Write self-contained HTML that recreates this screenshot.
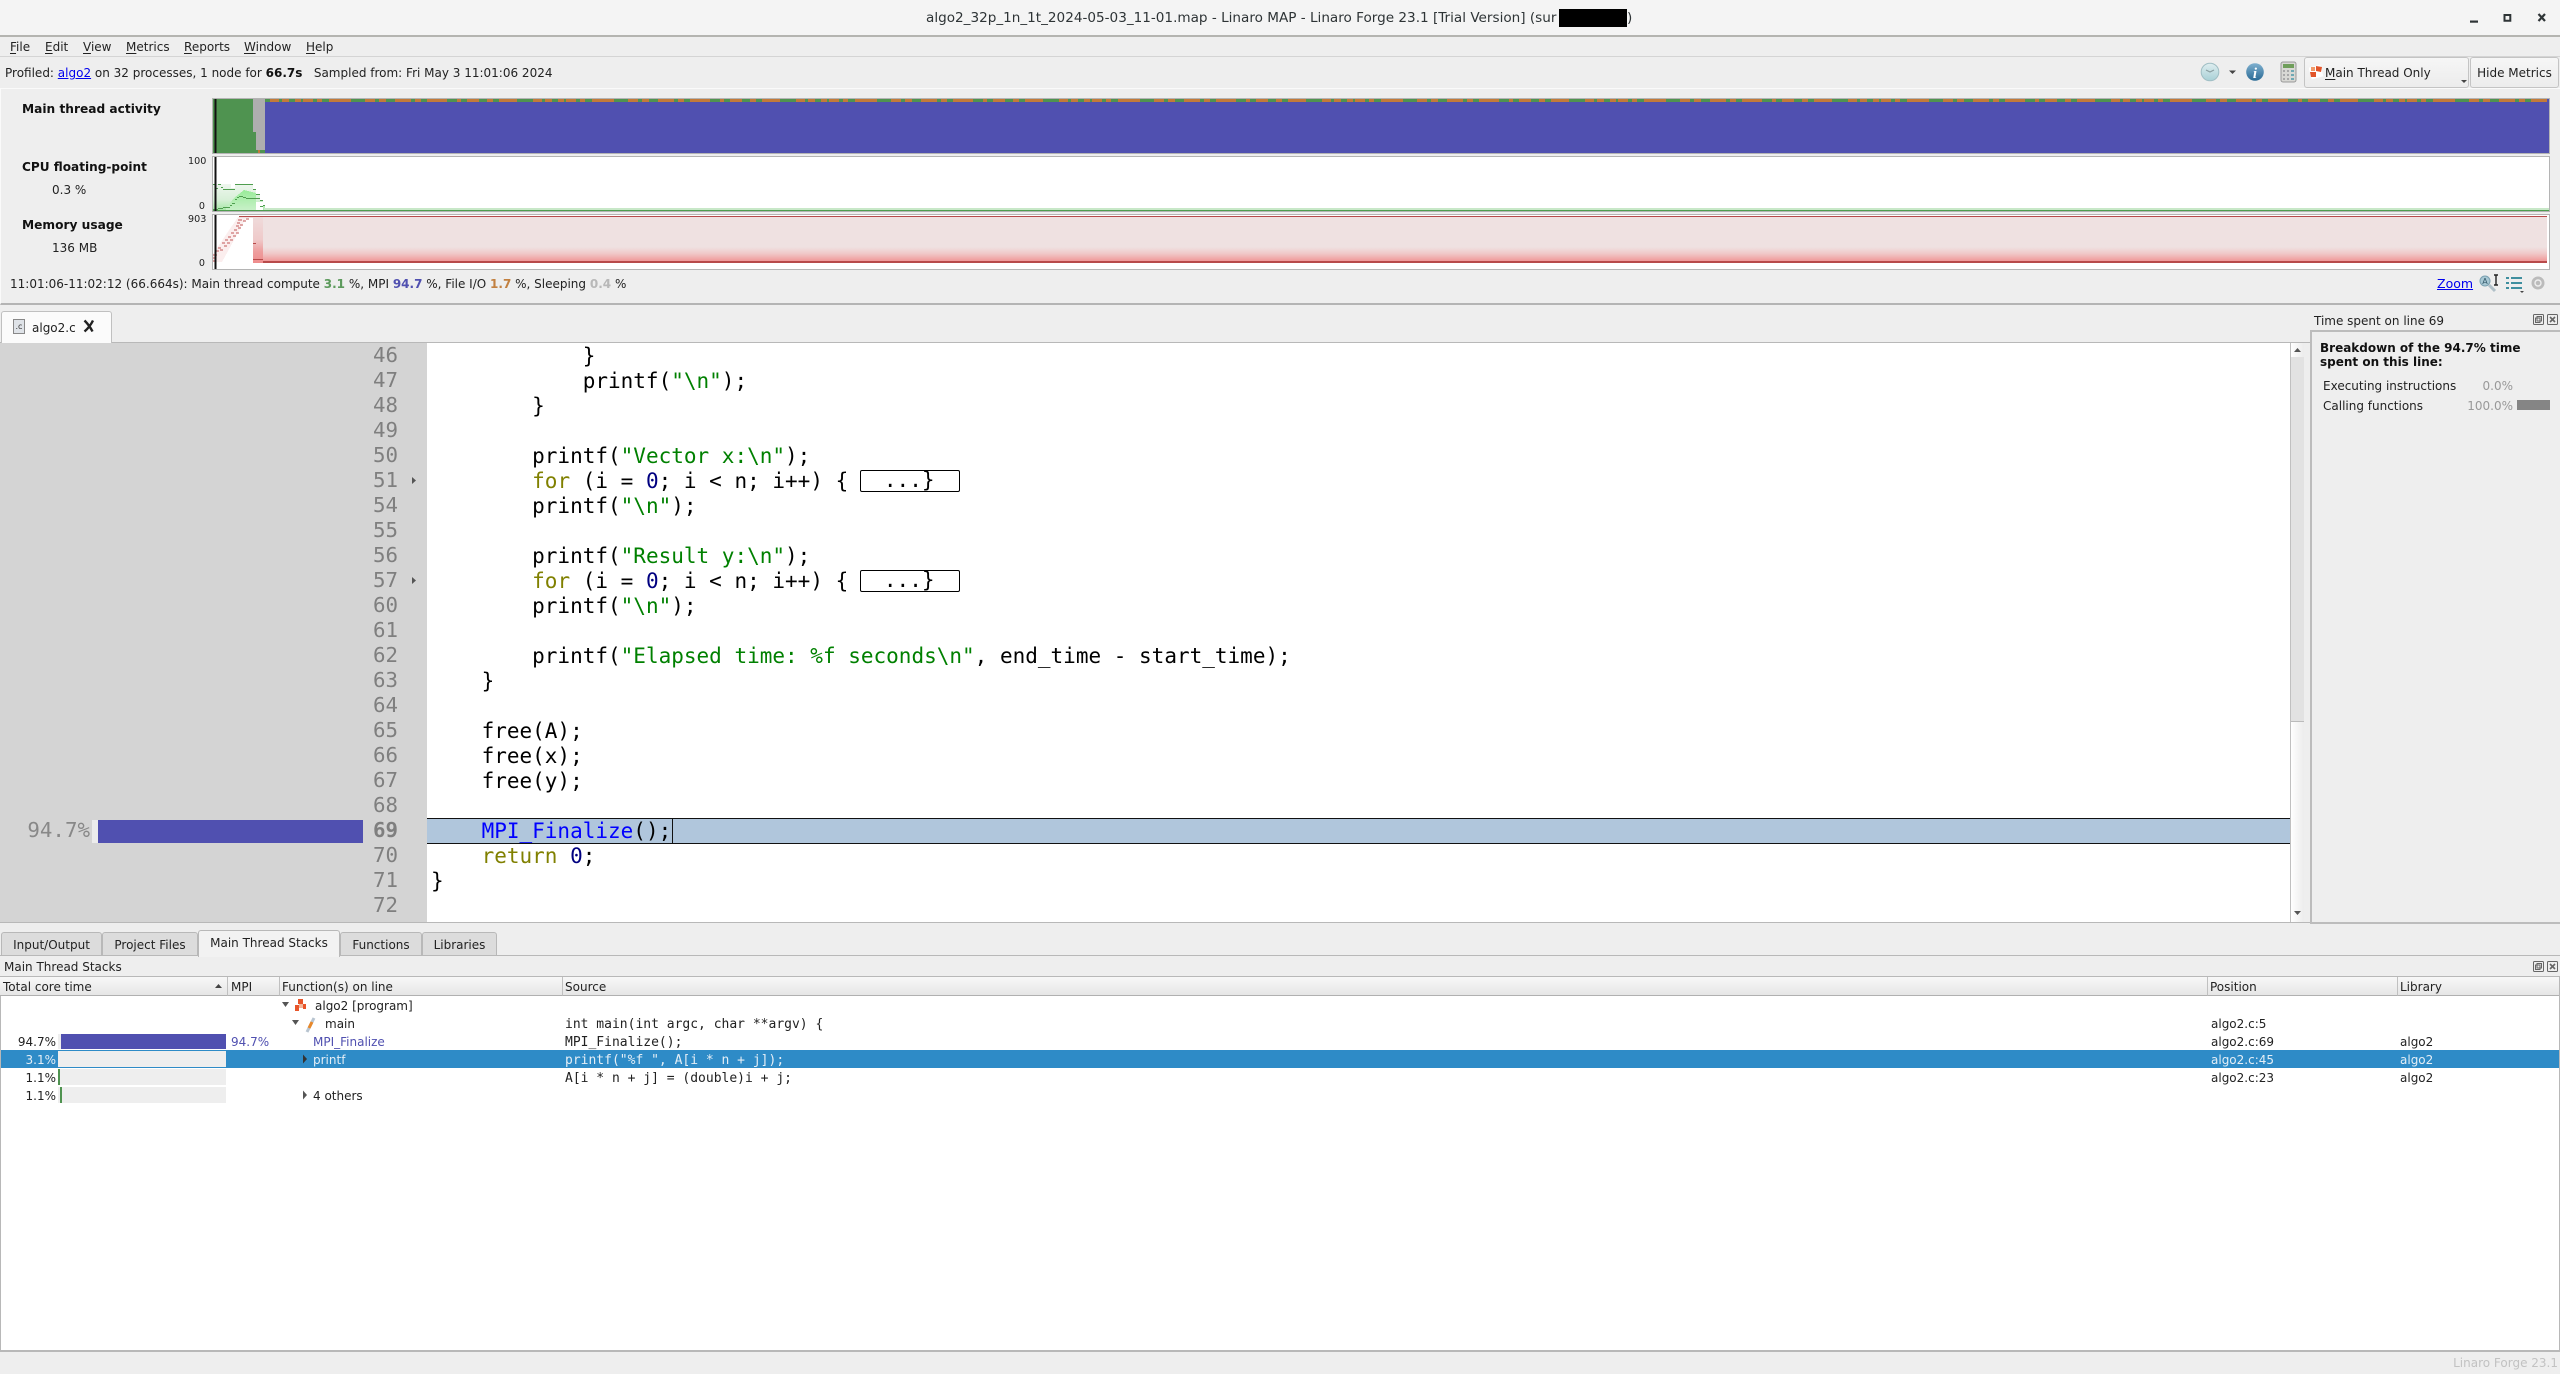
<!DOCTYPE html>
<html><head><meta charset="utf-8"><title>Linaro MAP</title>
<style>
html,body{margin:0;padding:0;background:#eeeeee;}
body{position:relative;width:2560px;height:1374px;overflow:hidden;font-family:"DejaVu Sans","Liberation Sans",sans-serif;font-size:12px;color:#222;}
div,span.a,a.a{position:absolute;}
.t{white-space:pre;line-height:20px;height:20px;margin-top:1px;}
.b{font-weight:bold;color:#111;}
u{text-underline-offset:2px;}
.box{box-sizing:border-box;}
.c{position:absolute;left:431px;height:25px;line-height:26px;font-family:"DejaVu Sans Mono","Liberation Mono",monospace;font-size:21px;white-space:pre;color:#000;}
.n{position:absolute;left:340px;width:58px;text-align:right;height:25px;line-height:25px;font-family:"DejaVu Sans Mono","Liberation Mono",monospace;font-size:20.8px;color:#7f7f7f;}
.s{color:#008000}.k{color:#808000}.d{color:#000080}.f{color:#0000ff}
.fold{display:inline-block;box-sizing:border-box;width:100px;height:22px;line-height:19px;border:1px solid #000;border-radius:2px;margin-left:-1px;vertical-align:0;padding-left:23px;position:relative;top:-1px;margin-top:-2px}
.tb{top:932px;height:24px;background:#dcdcdc;border:1px solid #b8b8b8;box-sizing:border-box;line-height:24px;text-align:center;border-radius:3px 3px 0 0;}
.h{top:977px;height:19px;line-height:21px;white-space:pre;padding-left:4px;box-sizing:border-box;background:linear-gradient(#f8f8f8,#e6e6e6);border-right:1px solid #c0c0c0;border-bottom:1px solid #b0b0b0;overflow:hidden;}
.r{white-space:pre;height:18px;line-height:18px;}
.m{font-family:"DejaVu Sans Mono","Liberation Mono",monospace;font-size:13px;margin-top:1px;}
.w{color:#e4eef6;}
</style></head><body>

<!-- title bar -->
<div class="box" style="left:0;top:0;width:2560px;height:37px;background:#f4f4f4;border-bottom:2px solid #b4b4b0"></div>
<div class="t" style="left:926px;top:7px;font-size:13.58px;color:#2e3436">algo2_32p_1n_1t_2024-05-03_11-01.map - Linaro MAP - Linaro Forge 23.1 [Trial Version] (sur </div>
<div style="left:1559px;top:9px;width:68px;height:18px;background:#000"></div>
<div class="t" style="left:1627px;top:7px;font-size:13.58px;color:#2e3436">)</div>
<svg style="position:absolute;left:2460px;top:8px" width="100" height="24"><path d="M10 12.500h8v2.200h-8z" fill="#2e3436"/><path d="M44.500 7h5.800v5.800h-5.800z" fill="none" stroke="#2e3436" stroke-width="2"/><path d="M78.500 6l6.500 7M85 6l-6.500 7" fill="none" stroke="#2e3436" stroke-width="2.200"/></svg>

<!-- menu -->
<div class="box" style="left:0;top:37px;width:2560px;height:20px;background:#eeeeee;border-bottom:1px solid #d4d4d4"></div>
<div class="t" style="left:10px;top:36px"><u>F</u>ile</div>
<div class="t" style="left:45px;top:36px"><u>E</u>dit</div>
<div class="t" style="left:83px;top:36px"><u>V</u>iew</div>
<div class="t" style="left:126px;top:36px"><u>M</u>etrics</div>
<div class="t" style="left:184px;top:36px"><u>R</u>eports</div>
<div class="t" style="left:244px;top:36px"><u>W</u>indow</div>
<div class="t" style="left:306px;top:36px"><u>H</u>elp</div>

<!-- toolbar -->
<div class="t" style="left:5px;top:62px">Profiled: <a href="#" style="color:#0000ee">algo2</a> on 32 processes, 1 node for <b style="color:#111">66.7s</b>   Sampled from: Fri May 3 11:01:06 2024</div>
<svg style="position:absolute;left:2195px;top:58px" width="112" height="30">
 <defs>
  <linearGradient id="g1" x1="0" y1="0" x2="0" y2="1"><stop offset="0" stop-color="#dfeef0"/><stop offset="1" stop-color="#a8d0d6"/></linearGradient>
  <linearGradient id="g2" x1="0" y1="0" x2="0" y2="1"><stop offset="0" stop-color="#7fb0cf"/><stop offset="1" stop-color="#2a6a95"/></linearGradient>
 </defs>
 <circle cx="15" cy="14" r="8.800" fill="url(#g1)" stroke="#a0bec4"/>
 <path d="M11 12l4 2 4-2" fill="none" stroke="#8a9ea1" stroke-width="1.200"/>
 <path d="M34 12.500h7l-3.500 3.500z" fill="#444"/>
 <circle cx="60" cy="14" r="8.800" fill="url(#g2)"/>
 <text x="60" y="20" font-family="Liberation Serif,serif" font-style="italic" font-weight="bold" font-size="15" fill="#fff" text-anchor="middle">i</text>
 <rect x="86" y="4" width="15" height="20" rx="2" fill="#d8d8d4" stroke="#999"/>
 <rect x="88" y="6" width="11" height="4" fill="#6f9e5a"/>
 <path d="M88 12h2v2h-2zM92 12h2v2h-2zM88 16h2v2h-2zM92 16h2v2h-2zM88 20h2v2h-2zM92 20h2v2h-2z" fill="#a8a8a8"/>
 <path d="M96 12h3v2h-3zM96 16h3v2h-3zM96 20h3v2h-3z" fill="#6fa8b4"/>
</svg>
<div class="box" style="left:2304px;top:57px;width:165px;height:31px;background:linear-gradient(#f6f6f6,#ececec);border:1px solid #c4c4c4;border-radius:3px"></div>
<svg style="position:absolute;left:2309px;top:64px" width="16" height="16"><rect x="1" y="2" width="12" height="12" fill="#fff" transform="rotate(-15 7 8)"/><path d="M7 2l6 1-1 5-5-1zM1 8l6 0v5l-5 0z" fill="#e2552a"/><path d="M2 3h4v4H2z" fill="#f09a6a"/></svg>
<div class="t" style="left:2325px;top:62px"><u>M</u>ain Thread Only</div>
<svg style="position:absolute;left:2460px;top:78px" width="8" height="8"><path d="M1 2h6l-3 3z" fill="#444"/></svg>
<div class="box" style="left:2470px;top:57px;width:89px;height:31px;background:linear-gradient(#f6f6f6,#ececec);border:1px solid #c4c4c4;border-radius:3px;text-align:center;line-height:30px">Hide Metrics</div>

<!-- metrics panel -->
<div class="box" style="left:0;top:88px;width:2560px;height:217px;background:#eeeeee;border-top:1px solid #fafafa;border-left:1px solid #fafafa;border-bottom:2px solid #b4b4b4"></div>
<div class="t b" style="left:22px;top:98px;font-size:12.2px">Main thread activity</div>
<div class="t b" style="left:22px;top:156px;font-size:12.1px">CPU floating-point</div>
<div class="t" style="left:52px;top:179px">0.3 %</div>
<div class="t b" style="left:22px;top:214px;font-size:12.2px">Memory usage</div>
<div class="t" style="left:52px;top:237px">136 MB</div>
<div class="t" style="left:188px;top:151px;width:17px;text-align:right;font-size:9.600px">100</div>
<div class="t" style="left:188px;top:196px;width:17px;text-align:right;font-size:9.600px">0</div>
<div class="t" style="left:188px;top:209px;width:17px;text-align:right;font-size:9.600px">903</div>
<div class="t" style="left:188px;top:253px;width:17px;text-align:right;font-size:9.600px">0</div>

<svg style="position:absolute;left:212px;top:98px" width="2338" height="172" viewBox="212 98 2338 172" shape-rendering="crispEdges">
 <defs>
  <pattern id="strip" x="267" y="99" width="263" height="3" patternUnits="userSpaceOnUse">
   <rect width="263" height="3" fill="#4f9350"/>
   <rect x="3" width="9" height="3" fill="#c27a3a"/><rect x="15" width="7" height="3" fill="#c27a3a"/><rect x="28" width="6" height="3" fill="#c27a3a"/><rect x="36" width="10" height="3" fill="#c27a3a"/><rect x="50" width="5" height="3" fill="#c27a3a"/><rect x="62" width="22" height="3" fill="#c27a3a"/><rect x="98" width="10" height="3" fill="#c27a3a"/><rect x="112" width="7" height="3" fill="#c27a3a"/><rect x="128" width="16" height="3" fill="#c27a3a"/><rect x="148" width="6" height="3" fill="#c27a3a"/><rect x="160" width="20" height="3" fill="#c27a3a"/><rect x="190" width="4" height="3" fill="#c27a3a"/><rect x="200" width="12" height="3" fill="#c27a3a"/><rect x="220" width="6" height="3" fill="#c27a3a"/><rect x="232" width="18" height="3" fill="#c27a3a"/>
  </pattern>
  <linearGradient id="cg" x1="0" y1="0" x2="0" y2="1"><stop offset="0" stop-color="#eef6ee"/><stop offset=".6" stop-color="#d8f0d8"/><stop offset="1" stop-color="#a8e8a8"/></linearGradient>
  <linearGradient id="cg2" x1="0" y1="0" x2="0" y2="1"><stop offset="0" stop-color="#98ec98"/><stop offset="1" stop-color="#c8f0c8"/></linearGradient>
  <linearGradient id="mg" x1="0" y1="216" x2="0" y2="263" gradientUnits="userSpaceOnUse"><stop offset="0" stop-color="#efe1e1"/><stop offset=".66" stop-color="#efe1e1"/><stop offset=".8" stop-color="#f0c8c8"/><stop offset=".92" stop-color="#f0a4a4"/><stop offset="1" stop-color="#ee8c8c"/></linearGradient>
  <linearGradient id="mg2" x1="0" y1="216" x2="0" y2="263" gradientUnits="userSpaceOnUse"><stop offset="0" stop-color="#efdcdc"/><stop offset=".5" stop-color="#efcaca"/><stop offset=".75" stop-color="#ee9e9e"/><stop offset="1" stop-color="#ee8c8c"/></linearGradient>
 </defs>
 <!-- main thread -->
 <rect x="212.500" y="98.500" width="2337" height="55" fill="#5050b0" stroke="#b4b4b4"/>
 <rect x="213" y="99" width="40" height="54" fill="#4f9350"/>
 <rect x="253" y="99" width="3" height="54" fill="#4f9350"/>
 <rect x="253" y="99" width="14" height="33" fill="#aeaeae"/>
 <rect x="256" y="132" width="9" height="18" fill="#aeaeae"/>
 <rect x="256" y="99" width="9" height="33" fill="#aeaeae"/>
 <rect x="256" y="150" width="9" height="3" fill="#4f9350"/>
 <rect x="258" y="150" width="2" height="3" fill="#c27a3a"/>
 <rect x="265" y="99" width="2" height="3" fill="#4f9350"/>
 <rect x="267" y="99" width="2280" height="3" fill="url(#strip)"/>
 <rect x="265" y="102" width="2" height="51" fill="#5050b0"/>
 <rect x="214.500" y="99" width="2" height="54" fill="#111"/>

 <!-- cpu -->
 <rect x="212.500" y="156.500" width="2337" height="55" fill="#fff" stroke="#b4b4b4"/>
 <path d="M213 184H231V188H235V184H253V189H256V194H260V200H263V205H265V210H213Z" fill="url(#cg)"/>
 <path d="M226 208L234 198L244 190L256 193V210H226Z" fill="url(#cg2)"/>
 <rect x="256" y="202" width="7" height="8" fill="#fff"/>
 <path d="M213 184.500h3M216 188.500h2M218 184.500h3M221 187.500h2M223 189.500h12M235 184.500h18M253 189.500h3M256 194.500h4M260 200.500h3M263 205.500h2" fill="none" stroke="#4f9e4f" stroke-width="1"/>
 <path d="M213 209.500h5M218 208.500h5M223 207.500h7M230 205.500h2M232 203.500h3M235 199.500h2M237 197.500h2M239 196.500h4M243 197.500h3M246 198.500h10M256 198.500h4M260 206.500h3" fill="none" stroke="#4f9e4f" stroke-width="1"/>
 <rect x="264" y="208" width="2285" height="2" fill="#c8e8c8"/>
 <rect x="213" y="210" width="2336" height="1" fill="#4f9e4f"/>
 <rect x="214.500" y="157" width="2" height="54" fill="#111"/>

 <!-- memory -->
 <rect x="212.500" y="214.500" width="2337" height="55" fill="#fff" stroke="#b4b4b4"/>
 <rect x="253" y="216" width="10" height="47" fill="url(#mg2)"/>
 <rect x="263" y="216" width="2284" height="47" fill="url(#mg)"/>
 <path d="M213 254L238 217H253V218H246L222 262H213Z" fill="#fbeeee"/>
 <path d="M213 255h4M213 258h3M213 261h3M216 251h3M218 248h3M220 250h3M222 243h3M224 246h3M225 240h3M227 243h3M228 237h3M230 240h3M231 233h3M233 236h3M234 230h3M236 233h3M236 226h3M238 228h3M237 223h3M240 225h3M238 220h4M243 221h3M239 217h5M246 219h3" fill="none" stroke="#c05858" stroke-width="1"/>
 <rect x="239" y="216" width="2308" height="1" fill="#b84a4a"/>
 <rect x="239" y="217" width="14" height="1" fill="#eee0e0"/>
 <rect x="253" y="243" width="3" height="1" fill="#b84a4a"/>
 <rect x="253" y="259" width="10" height="1" fill="#b84a4a"/>
 <rect x="263" y="261" width="2284" height="2" fill="#b84a4a"/>
 <rect x="214.500" y="215" width="2" height="54" fill="#111"/>
</svg>

<div class="t" style="left:10px;top:273px">11:01:06-11:02:12 (66.664s): Main thread compute <b style="color:#5c9a5c">3.1</b> %, MPI <b style="color:#5050b0">94.7</b> %, File I/O <b style="color:#c28040">1.7</b> %, Sleeping <b style="color:#b8b8b8">0.4</b> %</div>
<div class="t" style="left:2437px;top:273px;font-size:12.5px"><a href="#" style="color:#0000ee">Zoom</a></div>
<svg style="position:absolute;left:2478px;top:274px" width="78" height="20">
 <circle cx="7" cy="7" r="5" fill="#a8c8d4" stroke="#7aa0b0"/>
 <text x="7" y="10" font-size="8" text-anchor="middle" fill="#33596a" font-family="DejaVu Sans">A</text>
 <path d="M11 11l6 6" stroke="#b0c0c8" stroke-width="3"/>
 <path d="M16 1h4M18 1v10M16 11h4" stroke="#222" stroke-width="1.400" fill="none"/>
 <path d="M28 3h3v2h-3zM28 8h3v2h-3zM28 13h3v2h-3z" fill="#3f8f9f"/>
 <path d="M33 3h11v2H33zM33 8h11v2H33zM33 13h11v2H33z" fill="#3f8f9f"/>
 <path d="M42 17h4l-2 2z" fill="#444"/>
 <circle cx="60" cy="9" r="6.500" fill="#bbb"/><circle cx="60" cy="9" r="3" fill="none" stroke="#eee" stroke-width="1.400"/>
</svg>

<!-- tab row -->
<div class="box" style="left:0;top:342px;width:2310px;height:1px;background:#b8b8b8"></div>
<div class="box" style="left:1px;top:311px;width:111px;height:33px;background:#fbfbfb;border:1px solid #c0c0c0;border-bottom:none;border-radius:3px 3px 0 0"></div>
<svg style="position:absolute;left:13px;top:319px" width="14" height="16"><rect x=".5" y=".5" width="11" height="14" fill="#dfe3e8" stroke="#888"/><text x="6" y="10" font-size="8" text-anchor="middle" fill="#333" font-family="DejaVu Sans">.c</text></svg>
<div class="t" style="left:32px;top:317px">algo2.c</div>
<svg style="position:absolute;left:82px;top:319px" width="14" height="14"><path d="M2.500 1.500c3 3 6 7 8 11M11 1.500c-2 4-5 8-8.500 11" fill="none" stroke="#222" stroke-width="2.400"/></svg>

<!-- gutter -->
<div style="left:0;top:343px;width:427px;height:579px;background:#d4d4d4"></div>
<div style="left:427px;top:343px;width:1863px;height:579px;background:#fff"></div>
<div style="left:92px;top:820px;width:6px;height:23px;background:#ececec"></div>
<div style="left:98px;top:820px;width:265px;height:23px;background:#5050b0"></div>
<div class="n" style="left:20px;width:70px;top:818px;color:#888">94.7%</div>

<div class="n" style="top:343px">46</div><div class="c" style="top:343px">            }</div>
<div class="n" style="top:368px">47</div><div class="c" style="top:368px">            printf(<span class="s">"\n"</span>);</div>
<div class="n" style="top:393px">48</div><div class="c" style="top:393px">        }</div>
<div class="n" style="top:418px">49</div>
<div class="n" style="top:443px">50</div><div class="c" style="top:443px">        printf(<span class="s">"Vector x:\n"</span>);</div>
<div class="n" style="top:468px">51</div><div class="c" style="top:468px">        <span class="k">for</span> (i = <span class="d">0</span>; i &lt; n; i++) { <span class="fold">...}</span></div>
<div class="n" style="top:493px">54</div><div class="c" style="top:493px">        printf(<span class="s">"\n"</span>);</div>
<div class="n" style="top:518px">55</div>
<div class="n" style="top:543px">56</div><div class="c" style="top:543px">        printf(<span class="s">"Result y:\n"</span>);</div>
<div class="n" style="top:568px">57</div><div class="c" style="top:568px">        <span class="k">for</span> (i = <span class="d">0</span>; i &lt; n; i++) { <span class="fold">...}</span></div>
<div class="n" style="top:593px">60</div><div class="c" style="top:593px">        printf(<span class="s">"\n"</span>);</div>
<div class="n" style="top:618px">61</div>
<div class="n" style="top:643px">62</div><div class="c" style="top:643px">        printf(<span class="s">"Elapsed time: %f seconds\n"</span>, end_time - start_time);</div>
<div class="n" style="top:668px">63</div><div class="c" style="top:668px">    }</div>
<div class="n" style="top:693px">64</div>
<div class="n" style="top:718px">65</div><div class="c" style="top:718px">    free(A);</div>
<div class="n" style="top:743px">66</div><div class="c" style="top:743px">    free(x);</div>
<div class="n" style="top:768px">67</div><div class="c" style="top:768px">    free(y);</div>
<div class="n" style="top:793px">68</div>
<div class="box" style="left:427px;top:818px;width:1863px;height:26px;background:#b0c6dc;border-top:1px solid #111;border-bottom:1px solid #111"></div>
<div class="n" style="top:818px;font-weight:bold">69</div><div class="c" style="top:818px">    <span class="f">MPI_Finalize</span>();</div>
<div style="left:672px;top:819px;width:1px;height:24px;background:#111"></div>
<div class="n" style="top:843px">70</div><div class="c" style="top:843px">    <span class="k">return</span> <span class="d">0</span>;</div>
<div class="n" style="top:868px">71</div><div class="c" style="top:868px">}</div>
<div class="n" style="top:893px">72</div>
<svg style="position:absolute;left:411px;top:476px" width="7" height="10"><path d="M1 1l4 3.500-4 3.500z" fill="#555"/></svg>
<svg style="position:absolute;left:411px;top:576px" width="7" height="10"><path d="M1 1l4 3.500-4 3.500z" fill="#555"/></svg>

<!-- scrollbar -->
<div class="box" style="left:2290px;top:343px;width:14px;height:579px;background:linear-gradient(90deg,#fff,#ececec);border-left:1px solid #c0c0c0"></div>
<div class="box" style="left:2291px;top:357px;width:13px;height:365px;background:#e2e2e2;border-bottom:1px solid #bbb"></div>
<svg style="position:absolute;left:2291px;top:343px" width="13" height="14"><path d="M3 9h7l-3.500-4z" fill="#555"/></svg>
<svg style="position:absolute;left:2291px;top:906px" width="13" height="14"><path d="M3 5h7l-3.500 4z" fill="#555"/></svg>

<!-- right panel -->
<div class="t" style="left:2314px;top:310px">Time spent on line 69</div>
<svg style="position:absolute;left:2533px;top:314px" width="26" height="13"><g fill="none" stroke="#666"><rect x=".5" y=".5" width="10" height="10" rx="1"/><rect x="14.500" y=".5" width="10" height="10" rx="1"/><rect x="4" y="2.500" width="4.500" height="4.500"/><rect x="2.500" y="4" width="4.500" height="4.500"/><path d="M17 3l5 5M22 3l-5 5" stroke-width="1.600"/></g></svg>
<div class="box" style="left:2310px;top:330px;width:250px;height:594px;background:#eeeeee;border:2px solid #bcbcbc;border-right:none"></div>
<div class="b" style="left:2320px;top:341px;font-size:12px;line-height:14px;white-space:pre">Breakdown of the 94.7% time
spent on this line:</div>
<div class="t" style="left:2323px;top:375px">Executing instructions</div>
<div class="t" style="left:2470px;top:375px;width:43px;text-align:right;color:#999">0.0%</div>
<div class="t" style="left:2323px;top:395px">Calling functions</div>
<div class="t" style="left:2460px;top:395px;width:53px;text-align:right;color:#999">100.0%</div>
<div style="left:2517px;top:400px;width:33px;height:10px;background:#858585"></div>

<!-- splitter + bottom tabs -->
<div style="left:0;top:922px;width:2310px;height:1px;background:#b8b8b8"></div>
<div style="left:0;top:955px;width:2560px;height:1px;background:#b8b8b8"></div>
<div class="tb" style="left:1px;width:101px">Input/Output</div>
<div class="tb" style="left:102px;width:96px">Project Files</div>
<div class="tb" style="left:198px;top:930px;height:27px;width:142px;background:#f2f2f2;border-bottom:none;line-height:24px">Main Thread Stacks</div>
<div class="tb" style="left:340px;width:82px">Functions</div>
<div class="tb" style="left:422px;width:75px">Libraries</div>
<div class="t" style="left:4px;top:956px">Main Thread Stacks</div>
<svg style="position:absolute;left:2533px;top:961px" width="26" height="13"><g fill="none" stroke="#666"><rect x=".5" y=".5" width="10" height="10" rx="1"/><rect x="14.500" y=".5" width="10" height="10" rx="1"/><rect x="4" y="2.500" width="4.500" height="4.500"/><rect x="2.500" y="4" width="4.500" height="4.500"/><path d="M17 3l5 5M22 3l-5 5" stroke-width="1.600"/></g></svg>

<!-- table -->
<div class="box" style="left:0;top:976px;width:2560px;height:376px;background:#fff;border:1px solid #b8b8b8;border-width:1px 1px 2px 1px"></div>
<div class="h" style="left:0;width:228px;padding-left:3px">Total core time</div>
<svg style="position:absolute;left:213px;top:981px" width="12" height="10"><path d="M2 7h7l-3.500-4z" fill="#444"/></svg>
<div class="h" style="left:228px;width:52px;padding-left:3px">MPI</div>
<div class="h" style="left:280px;width:283px;padding-left:2px">Function(s) on line</div>
<div class="h" style="left:563px;width:1645px;padding-left:2px">Source</div>
<div class="h" style="left:2208px;width:190px;padding-left:2px">Position</div>
<div class="h" style="left:2398px;width:161px;padding-left:2px;border-right:none">Library</div>

<!-- rows -->
<svg style="position:absolute;left:280px;top:997px" width="70" height="38">
 <path d="M2 5h7l-3.500 5z" fill="#555"/>
 <path d="M16 3l8-2 3 7-3 7-7-1-2-7z" fill="#fff"/><path d="M18 2h5v5h-5zM23 7h3v5h-3zM15 8h4v6h-4z" fill="#e8552a"/><path d="M19 7h4v4h-4z" fill="#f3b59a"/>
 <path d="M12 23h7l-3.500 5z" fill="#555"/>
 <path d="M27 35l7-14" stroke="#b8c4d0" stroke-width="3"/><path d="M29 31l3-6" stroke="#e8882a" stroke-width="3"/>
</svg>
<div class="r" style="left:315px;top:997px">algo2 [program]</div>
<div class="r" style="left:325px;top:1015px">main</div>
<div class="r m" style="left:565px;top:1015px">int main(int argc, char **argv) {</div>
<div class="r" style="left:2211px;top:1015px">algo2.c:5</div>

<div class="r" style="left:8px;top:1033px;width:48px;text-align:right">94.7%</div>
<div style="left:58px;top:1034px;width:168px;height:15px;background:#eee"></div>
<div style="left:61px;top:1034px;width:165px;height:15px;background:#5050b0"></div>
<div class="r" style="left:231px;top:1033px;color:#5050b0">94.7%</div>
<div class="r" style="left:313px;top:1033px;color:#5050b0">MPI_Finalize</div>
<div class="r m" style="left:565px;top:1033px">MPI_Finalize();</div>
<div class="r" style="left:2211px;top:1033px">algo2.c:69</div>
<div class="r" style="left:2400px;top:1033px">algo2</div>

<div style="left:1px;top:1050px;width:2558px;height:18px;background:#2e8bc7"></div>
<div class="r w" style="left:8px;top:1051px;width:48px;text-align:right">3.1%</div>
<div style="left:58px;top:1051px;width:168px;height:16px;background:#eee"></div>
<svg style="position:absolute;left:302px;top:1054px" width="7" height="11"><path d="M1 .5l4 4.500-4 4.500z" fill="#333"/></svg>
<div class="r w" style="left:313px;top:1051px">printf</div>
<div class="r m w" style="left:565px;top:1051px">printf("%f ", A[i * n + j]);</div>
<div class="r w" style="left:2211px;top:1051px">algo2.c:45</div>
<div class="r w" style="left:2400px;top:1051px">algo2</div>

<div class="r" style="left:8px;top:1069px;width:48px;text-align:right">1.1%</div>
<div style="left:58px;top:1069px;width:168px;height:16px;background:#eee"></div>
<div style="left:58px;top:1069px;width:2px;height:16px;background:#4f9350"></div>
<div class="r m" style="left:565px;top:1069px">A[i * n + j] = (double)i + j;</div>
<div class="r" style="left:2211px;top:1069px">algo2.c:23</div>
<div class="r" style="left:2400px;top:1069px">algo2</div>

<div class="r" style="left:8px;top:1087px;width:48px;text-align:right">1.1%</div>
<div style="left:58px;top:1087px;width:168px;height:16px;background:#eee"></div>
<div style="left:60px;top:1087px;width:2px;height:16px;background:#4f9350"></div>
<svg style="position:absolute;left:302px;top:1090px" width="7" height="11"><path d="M1 .5l4 4.500-4 4.500z" fill="#555"/></svg>
<div class="r" style="left:313px;top:1087px">4 others</div>

<!-- status bar -->
<div class="t" style="left:2400px;width:158px;top:1352px;text-align:right;color:#c2c2c2">Linaro Forge 23.1</div>
</body></html>
